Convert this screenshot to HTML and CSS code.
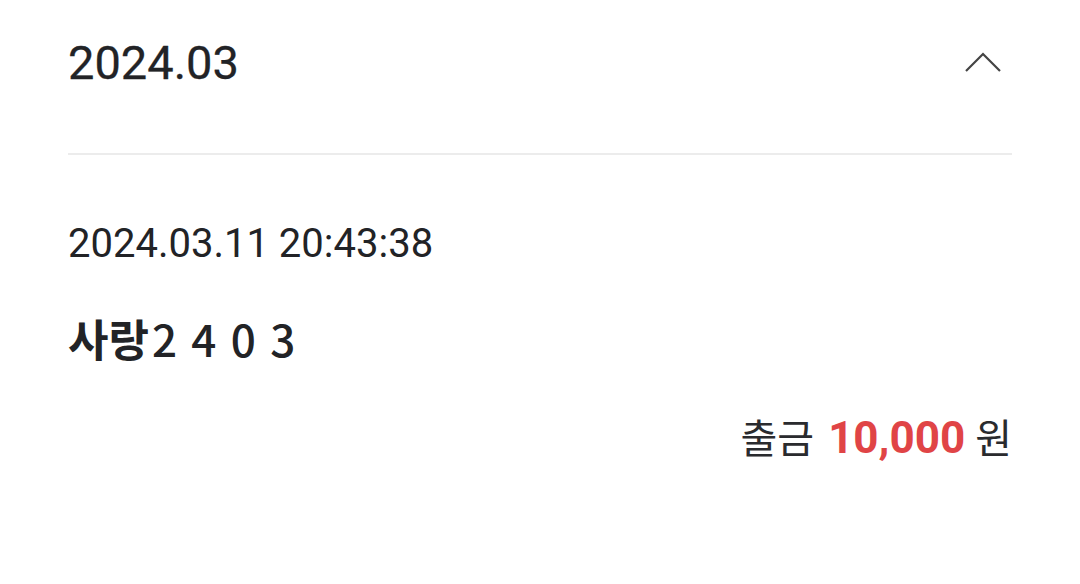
FILE: index.html
```html
<!DOCTYPE html>
<html lang="ko">
<head>
<meta charset="utf-8">
<link rel="stylesheet" href="styles.css">
</head>
<body>
<div class="panel">
  <div class="header">
    <div class="month">2024.03</div>
    <svg class="chevron" width="38" height="22" viewBox="0 0 38 22" aria-hidden="true">
      <polyline points="2,20 19,3 36,20" fill="none" stroke="#444" stroke-width="2.2"/>
    </svg>
  </div>
  <div class="divider"></div>
  <div class="entry">
    <div class="datetime">2024.03.11 20:43:38</div>
    <div class="name"><span class="name-text">사랑</span><span class="name-num">2 4 0 3</span></div>
    <div class="amount-row">
      <span class="label">출금</span>
      <span class="amount">10,000</span>
      <span class="unit">원</span>
    </div>
  </div>
</div>
</body>
</html>
```

FILE: styles.css
```css
html, body {
  margin: 0;
  padding: 0;
  background: #ffffff;
}
body {
  font-family: Roboto, "Noto Sans CJK KR", sans-serif;
  color: #222326;
  width: 1080px;
  height: 584px;
  overflow: hidden;
}
.panel {
  padding: 0 68px;
}
.header {
  display: flex;
  justify-content: space-between;
  align-items: flex-start;
  padding-top: 35px;
  height: 84px;
}
.month {
  font-size: 47px;
  line-height: 56px;
  font-weight: 400;
  -webkit-text-stroke: 0.3px #222326;
}
.chevron {
  margin-right: 10px;
  margin-top: 16px;
}
.divider {
  height: 2px;
  background: #ececec;
  margin-top: 34px;
}
.entry {
  padding-top: 65px;
}
.datetime {
  font-size: 40px;
  line-height: 48px;
}
.name {
  margin-top: 44px;
  font-family: "Noto Sans CJK KR", Roboto, sans-serif;
  font-size: 44px;
  line-height: 52px;
}
.name-text {
  font-weight: 700;
  margin-right: 3px;
}
.name-num {
  font-weight: 500;
  letter-spacing: 1px;
}
.amount-row {
  display: flex;
  justify-content: flex-end;
  align-items: baseline;
  gap: 12px;
  margin-top: 46px;
  font-size: 44px;
  line-height: 52px;
}
.label, .unit {
  font-family: "Noto Sans CJK KR", Roboto, sans-serif;
  font-size: 40px;
  font-weight: 400;
  color: #2a2b2e;
}
.amount {
  font-weight: 700;
  color: #e04446;
  margin-left: 2px;
  margin-right: -2px;
}
```
